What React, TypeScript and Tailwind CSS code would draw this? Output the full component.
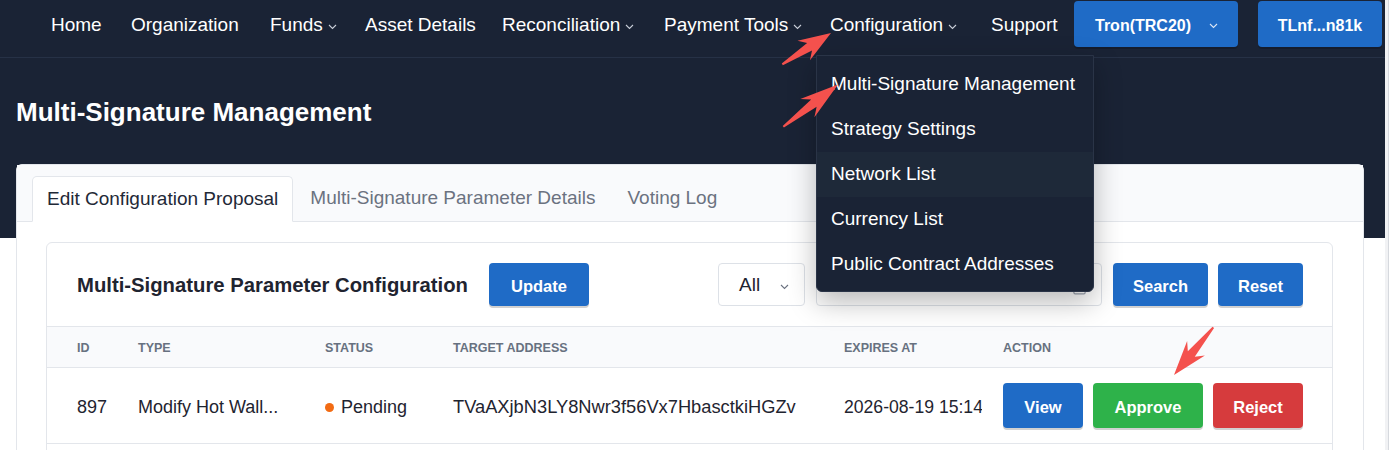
import React from 'react';
import { Calendar } from 'lucide-react';

const Chevron: React.FC<{ className?: string }> = ({ className = '' }) => (
  <svg width="9" height="6" viewBox="0 0 9 6" className={className} fill="none">
    <polyline points="1,1 4.5,4.5 8,1" stroke="currentColor" strokeWidth="1.1" />
  </svg>
);

const navItems = [
  { label: 'Home', w: 'w-[80px]' },
  { label: 'Organization', w: 'w-[139px]' },
  { label: 'Funds', w: 'w-[95px]', caret: true },
  { label: 'Asset Details', w: 'w-[137px]' },
  { label: 'Reconciliation', w: 'w-[162px]', caret: true },
  { label: 'Payment Tools', w: 'w-[166px]', caret: true },
  { label: 'Configuration', w: 'w-[161px]', caret: true, open: true },
  { label: 'Support', w: 'w-[83px]' },
];

const menuItems = [
  'Multi-Signature Management',
  'Strategy Settings',
  'Network List',
  'Currency List',
  'Public Contract Addresses',
];

// annotation arrow drawn from tail (x1,y1) to tip (x2,y2)
function arrowPoints(x1: number, y1: number, x2: number, y2: number) {
  const dx = x2 - x1;
  const dy = y2 - y1;
  const L = Math.hypot(dx, dy);
  const ux = dx / L;
  const uy = dy / L;
  const px = -uy;
  const py = ux;
  const pt = (a: number, b: number) => `${x1 + ux * a + px * b},${y1 + uy * a + py * b}`;
  return [
    pt(0, -1),
    pt(L * 0.56, -4.5),
    pt(L * 0.44, -11.5),
    pt(L, 0),
    pt(L * 0.44, 11.5),
    pt(L * 0.56, 4.5),
    pt(0, 1),
  ].join(' ');
}

const btn =
  'flex items-center justify-center rounded-[4px] pt-[3px] text-white font-bold text-[16.5px] shadow-[0_2px_0_rgba(0,0,0,0.18)]';

const App: React.FC = () => {
  return (
    <div className="relative flex h-[450px] w-[1391px] overflow-hidden bg-white font-['Liberation_Sans',Arial,sans-serif]">
      <div className="flex w-[1385px] flex-col">
        {/* Top navigation */}
        <nav className="relative z-20 h-[58px] shrink-0 border-b border-[#263146] bg-[#1a2335]">
          <div className="flex h-[48px] items-center pl-[51px]">
            {navItems.map((item) => (
              <div key={item.label} className={`relative flex h-full items-center pt-[2px] ${item.w}`}>
                <span className="text-[19px] text-white">{item.label}</span>
                {item.caret && <Chevron className="ml-[5px] mt-[3px] text-[#c9ced8]" />}
                {item.open && (
                  <div className="absolute left-[-14px] top-[55px] w-[278px] rounded-b-[6px] border border-[#2a3447] bg-[#1a2335] pb-[4px] pt-[6px] shadow-[0_10px_28px_rgba(0,0,0,0.28)]">
                    {menuItems.map((m) => (
                      <div
                        key={m}
                        className={`flex h-[45px] items-center pl-[14px] text-[19px] text-white ${
                          m === 'Network List' ? 'bg-[#1e2939]' : ''
                        }`}
                      >
                        {m}
                      </div>
                    ))}
                  </div>
                )}
              </div>
            ))}
            <button className={`${btn} h-[46px] w-[164px] !justify-between bg-[#1f6bc6] pl-[21px] pr-[20px] text-[16px]`}>
              <span>Tron(TRC20)</span>
              <Chevron className="text-[#dbe6f5]" />
            </button>
            <button className={`${btn} ml-[20px] h-[46px] w-[124px] bg-[#1f6bc6] text-[16px]`}>TLnf...n81k</button>
          </div>
        </nav>

        {/* Page header */}
        <div className="shrink-0 bg-[#1a2335] pb-[110px] pl-[16px] pt-[38px]">
          <h1 className="text-[26px] font-bold leading-[32px] text-white">Multi-Signature Management</h1>
        </div>

        {/* Card */}
        <div className="-mt-[74px] ml-[16px] w-[1348px] shrink-0 rounded-t-[6px] border border-[#e3e6eb] bg-white">
          <div className="flex h-[57px] items-end border-b border-[#e3e6eb] bg-[#f9fafc] pl-[15px]">
            <div className="-mb-px flex h-[46px] items-center rounded-t-[5px] border border-[#e3e6eb] border-b-white bg-white px-[14px] text-[19px] text-[#1f2937]">
              Edit Configuration Proposal
            </div>
            <div className="ml-[2px] flex h-[45px] items-center border border-transparent px-[14px] text-[19px] text-[#6b7280]">
              Multi-Signature Parameter Details
            </div>
            <div className="ml-[2px] flex h-[45px] items-center border border-transparent px-[14px] text-[19px] text-[#6b7280]">
              Voting Log
            </div>
          </div>

          <div className="px-[29px] pb-[40px] pt-[20px]">
            <div className="w-[1287px] rounded-[6px] border border-[#e3e6eb]">
              {/* Panel header */}
              <div className="flex h-[84px] items-center border-b border-[#e3e6eb] pl-[30px] pr-[29px]">
                <h2 className="pt-[2px] text-[20.3px] font-bold text-[#1f2430]">Multi-Signature Parameter Configuration</h2>
                <button className={`${btn} ml-[21px] h-[43px] w-[100px] bg-[#1f6bc6]`}>Update</button>
                <div className="flex-1" />
                <div className="flex h-[43px] w-[87px] items-center rounded-[4px] border border-[#dde1e7] bg-white pl-[20px] pt-[2px] text-[19px] text-[#1f2430]">
                  All
                  <Chevron className="ml-[20px] mt-[2px] text-[#6b7280]" />
                </div>
                <div className="ml-[11px] flex h-[43px] w-[286px] items-center justify-between rounded-[4px] border border-[#dde1e7] bg-white pl-[14px] pr-[14px] text-[18px] text-[#b5bac3]">
                  Date
                  <Calendar size={15} className="mt-[6px] text-[#9ca3af]" />
                </div>
                <button className={`${btn} ml-[11px] h-[43px] w-[95px] bg-[#1f6bc6]`}>Search</button>
                <button className={`${btn} ml-[10px] h-[43px] w-[85px] bg-[#1f6bc6]`}>Reset</button>
              </div>

              {/* Table header */}
              <div className="flex h-[41px] items-center border-b border-[#e3e6eb] bg-[#f9fafc] pt-[2px] text-[12.5px] font-bold uppercase text-[#677180]">
                <div className="w-[61px] pl-[30px]">ID</div>
                <div className="w-[187px] pl-[30px]">Type</div>
                <div className="w-[128px] pl-[30px]">Status</div>
                <div className="w-[391px] pl-[30px]">Target Address</div>
                <div className="w-[168px] pl-[30px]">Expires At</div>
                <div className="pl-[21px]">Action</div>
              </div>

              {/* Row */}
              <div className="flex h-[76px] items-center border-b border-[#e3e6eb] text-[18px] text-[#1f2430]">
                <div className="w-[61px] pl-[30px] pt-[3px]">897</div>
                <div className="w-[187px] whitespace-nowrap pl-[30px] pt-[3px]">Modify Hot Wall...</div>
                <div className="flex w-[128px] items-center pl-[30px] pt-[3px]">
                  <span className="mr-[7px] h-[9px] w-[9px] rounded-full bg-[#f26b13]" />
                  Pending
                </div>
                <div className="w-[391px] whitespace-nowrap pl-[30px] pt-[3px] text-[18.3px]">TVaAXjbN3LY8Nwr3f56Vx7HbasctkiHGZv</div>
                <div className="w-[168px] overflow-hidden whitespace-nowrap pl-[30px] pt-[3px] text-[17.6px]">2026-08-19 15:14</div>
                <div className="flex items-center gap-[10px] pl-[21px]">
                  <button className={`${btn} h-[45px] w-[80px] bg-[#1f6bc6]`}>View</button>
                  <button className={`${btn} h-[45px] w-[110px] bg-[#2eb24a]`}>Approve</button>
                  <button className={`${btn} h-[45px] w-[90px] bg-[#d63b3d]`}>Reject</button>
                </div>
              </div>
              <div className="h-[60px]" />
            </div>
          </div>
        </div>
      </div>

      {/* scrollbar strip */}
      <div className="flex w-[6px]">
        <div className="w-[3px] bg-[#f1f2f4]" />
        <div className="w-px bg-[#d6d9de]" />
        <div className="flex-1 bg-white" />
      </div>

      {/* annotation arrows */}
      <svg className="pointer-events-none absolute inset-0 z-30" width="1391" height="450">
        <polygon points={arrowPoints(782.3, 64.3, 831, 33)} fill="#f4514d" />
        <polygon points={arrowPoints(783.3, 126.7, 838, 84.5)} fill="#f4514d" />
        <polygon points={arrowPoints(1213.3, 327.3, 1174, 375)} fill="#f4514d" />
      </svg>
    </div>
  );
};

export default App;
